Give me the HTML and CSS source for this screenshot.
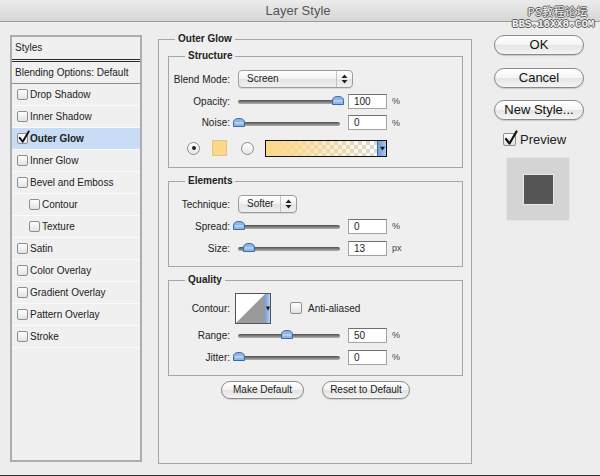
FILE: index.html
```html
<!DOCTYPE html>
<html>
<head>
<meta charset="utf-8">
<link rel="stylesheet" href="styles.css">
</head>
<body>
<div class="titlebar">Layer Style</div>
<div class="watermark"><div class="wm1">PS教程论坛</div><div class="wm2">BBS.16XX8.COM</div></div>
<div class="content">
  <div class="styles-panel">
    <div class="row-head">Styles</div>
    <div class="row-blend">Blending Options: Default</div>
    <div class="item"><span class="cb"></span>Drop Shadow</div>
    <div class="item"><span class="cb"></span>Inner Shadow</div>
    <div class="item selected"><span class="cb checked"><svg viewBox="0 0 14 16" class="tick"><path d="M2 9 L5.5 13.5 L12.5 1.5" fill="none" stroke="#111" stroke-width="2.2" stroke-linecap="round" stroke-linejoin="round"/></svg></span>Outer Glow</div>
    <div class="item"><span class="cb"></span>Inner Glow</div>
    <div class="item"><span class="cb"></span>Bevel and Emboss</div>
    <div class="item sub"><span class="cb"></span>Contour</div>
    <div class="item sub"><span class="cb"></span>Texture</div>
    <div class="item"><span class="cb"></span>Satin</div>
    <div class="item"><span class="cb"></span>Color Overlay</div>
    <div class="item"><span class="cb"></span>Gradient Overlay</div>
    <div class="item"><span class="cb"></span>Pattern Overlay</div>
    <div class="item"><span class="cb"></span>Stroke</div>
  </div>

  <fieldset class="outer">
    <legend class="lg-outer">Outer Glow</legend>

    <fieldset class="group">
      <legend class="lg">Structure</legend>
      <div class="frow h22">
        <span class="lbl">Blend Mode:</span>
        <div class="popup w115"><span class="ptext">Screen</span><span class="parrow"><svg viewBox="0 0 7 10" width="7" height="10"><path d="M3.5 0.5 L6.5 4 H0.5 Z M3.5 9.5 L6.5 6 H0.5 Z" fill="#222"/></svg></span></div>
      </div>
      <div class="frow h22">
        <span class="lbl">Opacity:</span>
        <div class="slider"><div class="track"></div><svg class="thumb" style="left:94px" viewBox="0 0 12 9" width="12" height="9"><path d="M0.5 8.5 V4.5 Q0.5 0.5 6 0.5 Q11.5 0.5 11.5 4.5 V8.5 Z" fill="#8fb6e6" stroke="#3d6aa5"/><path d="M2 5 H10" stroke="#d8e8fa" stroke-width="1"/></svg></div>
        <span class="num">100</span><span class="unit">%</span>
      </div>
      <div class="frow h21">
        <span class="lbl">Noise:</span>
        <div class="slider"><div class="track"></div><svg class="thumb" style="left:-5px" viewBox="0 0 12 9" width="12" height="9"><path d="M0.5 8.5 V4.5 Q0.5 0.5 6 0.5 Q11.5 0.5 11.5 4.5 V8.5 Z" fill="#8fb6e6" stroke="#3d6aa5"/><path d="M2 5 H10" stroke="#d8e8fa" stroke-width="1"/></svg></div>
        <span class="num">0</span><span class="unit">%</span>
      </div>
      <div class="frow h30">
        <span class="radio on"><span class="dot"></span></span>
        <span class="swatch"></span>
        <span class="radio r2"></span>
        <span class="gradient"><span class="gfill"></span><span class="garrow"><svg viewBox="0 0 6 6" width="5" height="5"><path d="M0 1 H6 L3 5.5 Z" fill="#111"/></svg></span></span>
      </div>
    </fieldset>

    <fieldset class="group">
      <legend class="lg">Elements</legend>
      <div class="frow h22">
        <span class="lbl">Technique:</span>
        <div class="popup w59"><span class="ptext">Softer</span><span class="parrow"><svg viewBox="0 0 7 10" width="7" height="10"><path d="M3.5 0.5 L6.5 4 H0.5 Z M3.5 9.5 L6.5 6 H0.5 Z" fill="#222"/></svg></span></div>
      </div>
      <div class="frow h22">
        <span class="lbl">Spread:</span>
        <div class="slider"><div class="track"></div><svg class="thumb" style="left:-5px" viewBox="0 0 12 9" width="12" height="9"><path d="M0.5 8.5 V4.5 Q0.5 0.5 6 0.5 Q11.5 0.5 11.5 4.5 V8.5 Z" fill="#8fb6e6" stroke="#3d6aa5"/><path d="M2 5 H10" stroke="#d8e8fa" stroke-width="1"/></svg></div>
        <span class="num">0</span><span class="unit">%</span>
      </div>
      <div class="frow h22">
        <span class="lbl">Size:</span>
        <div class="slider"><div class="track"></div><svg class="thumb" style="left:5px" viewBox="0 0 12 9" width="12" height="9"><path d="M0.5 8.5 V4.5 Q0.5 0.5 6 0.5 Q11.5 0.5 11.5 4.5 V8.5 Z" fill="#8fb6e6" stroke="#3d6aa5"/><path d="M2 5 H10" stroke="#d8e8fa" stroke-width="1"/></svg></div>
        <span class="num">13</span><span class="unit">px</span>
      </div>
    </fieldset>

    <fieldset class="group">
      <legend class="lg">Quality</legend>
      <div class="frow h32">
        <span class="lbl">Contour:</span>
        <span class="contour"><svg viewBox="0 0 30 30" width="30" height="30" class="csvg"><rect width="30" height="30" fill="#fff"/><path d="M0 30 L30 0 V30 Z" fill="#9a9a9a"/></svg><span class="carrow"><svg viewBox="0 0 6 8" width="4" height="7"><path d="M0 1 H6 L3 7.5 Z" fill="#111"/></svg></span></span>
        <span class="cb aa"></span><span class="aatext">Anti-aliased</span>
      </div>
      <div class="frow h22">
        <span class="lbl">Range:</span>
        <div class="slider"><div class="track"></div><svg class="thumb" style="left:43px" viewBox="0 0 12 9" width="12" height="9"><path d="M0.5 8.5 V4.5 Q0.5 0.5 6 0.5 Q11.5 0.5 11.5 4.5 V8.5 Z" fill="#8fb6e6" stroke="#3d6aa5"/><path d="M2 5 H10" stroke="#d8e8fa" stroke-width="1"/></svg></div>
        <span class="num">50</span><span class="unit">%</span>
      </div>
      <div class="frow h22">
        <span class="lbl">Jitter:</span>
        <div class="slider"><div class="track"></div><svg class="thumb" style="left:-5px" viewBox="0 0 12 9" width="12" height="9"><path d="M0.5 8.5 V4.5 Q0.5 0.5 6 0.5 Q11.5 0.5 11.5 4.5 V8.5 Z" fill="#8fb6e6" stroke="#3d6aa5"/><path d="M2 5 H10" stroke="#d8e8fa" stroke-width="1"/></svg></div>
        <span class="num">0</span><span class="unit">%</span>
      </div>
    </fieldset>

    <div class="defaults">
      <span class="sbtn w83">Make Default</span>
      <span class="sbtn w88">Reset to Default</span>
    </div>
  </fieldset>

  <div class="side">
    <span class="btn">OK</span>
    <span class="btn">Cancel</span>
    <span class="btn">New Style...</span>
    <div class="preview-row"><span class="pcb"><svg viewBox="0 0 14 16" class="ptick"><path d="M2 9 L5.5 13.5 L12.5 1.5" fill="none" stroke="#111" stroke-width="2.2" stroke-linecap="round" stroke-linejoin="round"/></svg></span>Preview</div>
    <div class="preview-box"><div class="preview-sq"></div></div>
  </div>
</div>
</body>
</html>
```
FILE: styles.css
```css
* { box-sizing: border-box; }
html, body { margin: 0; padding: 0; }
body {
  width: 600px;
  height: 476px;
  background: #ededed;
  font-family: "Liberation Sans", Arial, sans-serif;
  font-size: 10px;
  color: #222;
  position: relative;
  overflow: hidden;
  border-bottom: 1px solid #333;
}
.titlebar {
  height: 22px;
  line-height: 21px;
  text-align: center;
  font-size: 13px;
  color: #555;
  background: linear-gradient(#ececec, #d6d6d6);
  border-bottom: 1px solid #9c9c9c;
  text-indent: -4px;
}
.watermark {
  position: absolute;
  top: 5px;
  right: 6px;
  text-align: right;
  color: #f4f4f4;
  text-shadow: 1px 0 0 #5a5a5a, -1px 0 0 #5a5a5a, 0 1px 0 #5a5a5a, 0 -1px 0 #5a5a5a;
}
.wm1 {
  font-family: "Noto Sans CJK SC", sans-serif;
  font-size: 11px;
  line-height: 12px;
  height: 12px;
  padding-right: 6px;
  letter-spacing: 0.5px;
}
.wm2 {
  margin-top: 2px;
  font-family: "Liberation Mono", monospace;
  font-size: 11px;
  line-height: 10px;
  height: 10px;
  font-weight: bold;
  letter-spacing: -0.3px;
}

.content {
  display: flex;
  align-items: flex-start;
  padding: 11px 0 0 10px;
}
.styles-panel {
  margin-top: 2px;
  width: 132px;
  height: 427px;
  border: 2px solid #adadad;
  background: #f0f0f0;
}
.row-head {
  height: 25px;
  line-height: 22px;
  padding-left: 3px;
  border-bottom: 3px double #2a2a2a;
}
.row-blend {
  height: 22px;
  line-height: 21px;
  padding-left: 3px;
  border-bottom: 1px solid #8f8f8f;
}
.item {
  height: 22px;
  display: flex;
  align-items: center;
  padding-left: 5px;
  padding-bottom: 1px;
  border-bottom: 1px solid #fbfbfb;
}
.item.sub { padding-left: 17px; }
.item.selected { background: #c8dcf5; font-weight: bold; }
.cb {
  width: 11px;
  height: 11px;
  border: 1px solid #8e8e8e;
  border-radius: 2px;
  background: linear-gradient(#ffffff, #e2e2e2);
  margin-right: 2px;
  flex: none;
  position: relative;
}
.tick {
  position: absolute;
  left: 0px;
  top: -4px;
  width: 12px;
  height: 14px;
}

fieldset { margin: 0; min-width: 0; }
.outer {
  margin-left: 16px;
  width: 314px;
  height: 431px;
  border: 1px solid #a5a5a5;
  padding: 0 8px 0 9px;
  background: #efefef;
}
.lg-outer {
  font-weight: bold;
  line-height: 12px;
  padding: 0 3px;
  margin-left: 7px;
}
.group {
  margin-top: 5px;
  border: 1px solid #a5a5a5;
  padding: 6px 3px 4px 3px;
}
.group + .group { margin-top: 7px; }
.group:nth-of-type(2), .group:nth-of-type(3) { padding-bottom: 7px; }
.lg {
  font-weight: bold;
  line-height: 12px;
  padding: 0 3px;
  margin-left: 13px;
}
.frow { display: flex; align-items: center; }
.h21 { height: 21px; }
.h22 { height: 22px; }
.h30 { height: 30px; }
.h32 { height: 32px; }
.lbl {
  width: 58px;
  text-align: right;
  margin-right: 8px;
  flex: none;
}
.popup {
  height: 18px;
  display: flex;
  border: 1px solid #9b9b9b;
  border-radius: 4px;
  background: linear-gradient(#ffffff, #f3f3f3 50%, #e4e4e4 51%, #f0f0f0);
  box-shadow: 0 1px 0 #d8d8d8;
}
.w115 { width: 115px; }
.w59 { width: 59px; }
.ptext { flex: 1; line-height: 16px; padding-left: 8px; }
.parrow {
  width: 16px;
  border-left: 1px solid #c4c4c4;
  display: flex;
  align-items: center;
  justify-content: center;
}
.slider {
  position: relative;
  width: 102px;
  height: 10px;
  margin-right: 8px;
  flex: none;
}
.track {
  margin-top: 4px;
  height: 4px;
  border-radius: 2px;
  background: linear-gradient(#4f4f4f, #8a8a8a 60%, #b0b0b0);
}
.thumb { position: absolute; top: 0; }
.num {
  width: 39px;
  height: 15px;
  border: 1px solid #a2a2a2;
  border-top-color: #6f6f6f;
  background: #fff;
  padding-left: 5px;
  line-height: 13px;
  flex: none;
}
.unit { margin-left: 5px; color: #444; font-size: 9px; }
.radio {
  width: 13px;
  height: 13px;
  border: 1px solid #8c8c8c;
  border-radius: 50%;
  background: linear-gradient(#ffffff, #e6e6e6);
  display: flex;
  align-items: center;
  justify-content: center;
  flex: none;
  margin-left: 15px;
}
.radio.r2 { margin-left: 14px; }
.dot { width: 4px; height: 4px; border-radius: 50%; background: #222; }
.swatch {
  width: 15px;
  height: 16px;
  margin-left: 12px;
  background: #fcd88b;
  border: 1px solid #e4c47d;
}
.gradient {
  margin-left: 11px;
  width: 122px;
  height: 17px;
  border: 1px solid #111;
  display: flex;
}
.gfill {
  flex: 1;
  background:
    linear-gradient(90deg, #fdd88a 0%, rgba(253,216,138,0.85) 25%, rgba(253,216,138,0) 100%),
    repeating-conic-gradient(#d8d8d8 0 25%, #ffffff 0 50%) 0 0 / 8px 8px;
}
.garrow {
  width: 9px;
  background: linear-gradient(90deg, #6f9fdc, #a9c8f0);
  border-left: 1px solid #3d6aa5;
  display: flex;
  align-items: center;
  justify-content: center;
}
.contour {
  margin-left: -3px;
  width: 36px;
  height: 31px;
  border: 1px solid #555;
  display: flex;
  flex: none;
}
.csvg { display: block; width: 29px; height: 29px; }
.carrow {
  flex: 1;
  background: linear-gradient(90deg, #6f9fdc, #b3d0f3);
  display: flex;
  align-items: center;
  justify-content: center;
}
.cb.aa { margin-left: 19px; width: 12px; height: 12px; margin-right: 0; }
.aatext { margin-left: 6px; }

.defaults {
  display: flex;
  justify-content: center;
  gap: 18px;
  margin-top: 5px;
}
.sbtn {
  height: 18px;
  border: 1px solid #8c8c8c;
  border-radius: 9px;
  background: linear-gradient(#ffffff, #f2f2f2 50%, #e3e3e3 51%, #f4f4f4);
  text-align: center;
  line-height: 16px;
  box-shadow: 0 1px 1px #cfcfcf;
}
.w83 { width: 83px; }
.w88 { width: 88px; }

.side {
  margin-left: 22px;
  margin-top: 2px;
  display: flex;
  flex-direction: column;
  width: 90px;
}
.btn {
  height: 20px;
  border: 1px solid #8a8a8a;
  border-radius: 10px;
  background: linear-gradient(#ffffff, #f4f4f4 50%, #e4e4e4 51%, #f5f5f5);
  text-align: center;
  line-height: 18px;
  font-size: 13px;
  color: #111;
  box-shadow: 0 1px 1px #c8c8c8;
  margin-bottom: 12px;
}
.btn:first-child { margin-bottom: 13px; }
.preview-row {
  display: flex;
  align-items: center;
  font-size: 13px;
  margin-left: 9px;
  margin-top: -1px;
  height: 16px;
}
.pcb {
  width: 13px;
  height: 13px;
  border: 1px solid #8e8e8e;
  border-radius: 2px;
  background: linear-gradient(#ffffff, #e2e2e2);
  margin-right: 4px;
  position: relative;
  flex: none;
}
.ptick { position: absolute; left: 0; top: -4px; width: 14px; height: 16px; }
.preview-box {
  margin-top: 10px;
  margin-left: 12px;
  width: 64px;
  height: 64px;
  background: #d4d4d4;
  border: 1px solid #e6e6e6;
  display: flex;
  align-items: center;
  justify-content: center;
}
.preview-sq {
  width: 31px;
  height: 31px;
  background: #555;
  border: 1px solid #e8e8e8;
}
```
